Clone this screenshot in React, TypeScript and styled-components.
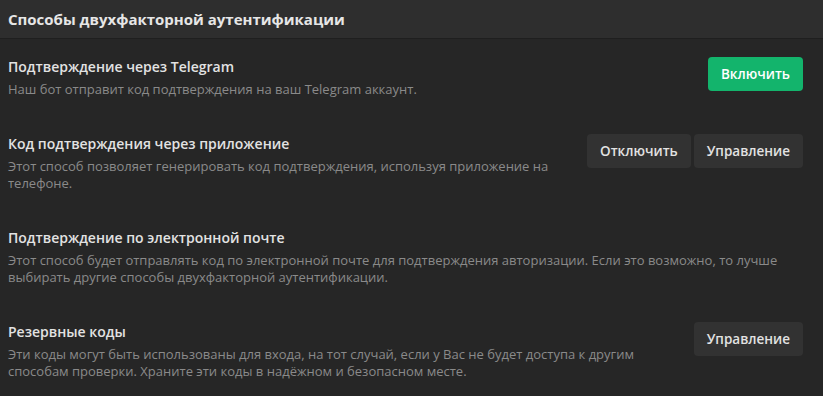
import styled, { createGlobalStyle } from "styled-components";

const GlobalStyle = createGlobalStyle`
  body {
    margin: 0;
    background: #262626;
    font-family: "Open Sans", "Noto Sans", sans-serif;
  }
`;

const methods = [
  {
    title: "Подтверждение через Telegram",
    text: "Наш бот отправит код подтверждения на ваш Telegram аккаунт.",
    buttons: [{ label: "Включить", primary: true }],
  },
  {
    title: "Код подтверждения через приложение",
    text: "Этот способ позволяет генерировать код подтверждения, используя приложение на телефоне.",
    buttons: [{ label: "Отключить" }, { label: "Управление" }],
  },
  {
    title: "Подтверждение по электронной почте",
    text: "Этот способ будет отправлять код по электронной почте для подтверждения авторизации. Если это возможно, то лучше выбирать другие способы двухфакторной аутентификации.",
    buttons: [],
  },
  {
    title: "Резервные коды",
    text: "Эти коды могут быть использованы для входа, на тот случай, если у Вас не будет доступа к другим способам проверки. Храните эти коды в надёжном и безопасном месте.",
    buttons: [{ label: "Управление" }],
  },
];

const App = () => {
  return (
    <>
      <GlobalStyle />
      <Panel>
        <Header>Способы двухфакторной аутентификации</Header>
        <List>
          {methods.map((m, index) => (
            <Row key={index}>
              <Info>
                <Title>{m.title}</Title>
                <Description>{m.text}</Description>
              </Info>
              {m.buttons.length > 0 && (
                <Actions>
                  {m.buttons.map((b) => (
                    <Button key={b.label} primary={b.primary}>
                      {b.label}
                    </Button>
                  ))}
                </Actions>
              )}
            </Row>
          ))}
        </List>
      </Panel>
    </>
  );
};

const Panel = styled.div`
  width: 823px;
  height: 396px;
  background: #262626;
  overflow: hidden;
`;

const Header = styled.div`
  height: 38px;
  display: flex;
  align-items: center;
  padding: 0 8px;
  background: #2e2e2e;
  border-bottom: 1px solid #1f1f1f;
  color: #e6e6e6;
  font-size: 15px;
  font-weight: 700;
`;

const List = styled.div`
  display: flex;
  flex-direction: column;
`;

const Row = styled.div`
  display: flex;
  align-items: flex-start;
  gap: 28px;
  padding: 18px 20px 18px 8px;
`;

const Info = styled.div`
  flex: 1;
  display: flex;
  flex-direction: column;
  gap: 4px;
`;

const Title = styled.div`
  color: #e2e2e2;
  font-size: 14px;
  font-weight: 600;
  line-height: 20px;
`;

const Description = styled.div`
  color: #8a8a8a;
  font-size: 13px;
  line-height: 17px;
`;

const Actions = styled.div`
  display: flex;
  gap: 3px;
`;

interface ButtonProps {
  primary?: boolean;
}

const Button = styled.button<ButtonProps>`
  height: 34px;
  padding: 0 13px;
  border: none;
  border-radius: 4px;
  background: ${(props) => (props.primary ? "#13b46c" : "#323232")};
  color: ${(props) => (props.primary ? "#ffffff" : "#e2e2e2")};
  font-family: "Open Sans", "Noto Sans", sans-serif;
  font-size: 13.5px;
  font-weight: 600;
  cursor: pointer;
`;

export default App;
